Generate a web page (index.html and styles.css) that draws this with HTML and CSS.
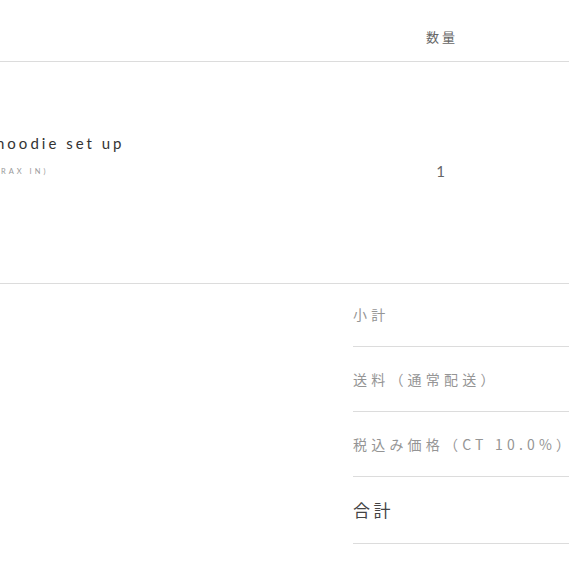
FILE: index.html
```html
<!DOCTYPE html>
<html lang="ja">
<head>
<meta charset="utf-8">
<link rel="stylesheet" href="styles.css">
</head>
<body>
<div class="cart">
  <div class="cart-head">
    <div class="col-product"></div>
    <div class="col-qty head-label">数量</div>
    <div class="col-price"></div>
  </div>
  <div class="cart-item">
    <div class="col-product item-info">
      <div class="item-name">hoodie set up</div>
      <div class="item-variant">(RAX IN)</div>
    </div>
    <div class="col-qty item-qty">1</div>
    <div class="col-price"></div>
  </div>
  <div class="summary">
    <div class="sum-row first"><span class="sum-label">小計</span></div>
    <div class="sum-row"><span class="sum-label">送料（通常配送）</span></div>
    <div class="sum-row"><span class="sum-label">税込み価格（CT 10.0%）</span></div>
    <div class="sum-row total"><span class="sum-label">合計</span></div>
  </div>
</div>
</body>
</html>
```
FILE: styles.css
```css
html, body {
  margin: 0;
  padding: 0;
  background: #ffffff;
  overflow: hidden;
}
body {
  width: 569px;
  height: 569px;
  font-family: "Noto Sans CJK JP", "Noto Sans", sans-serif;
  color: #555;
}
.cart {
  display: flex;
  flex-direction: column;
}
.cart-head,
.cart-item {
  display: grid;
  grid-template-columns: 1fr 100px 77px;
  border-bottom: 1px solid #dcdcdc;
}
.cart-head {
  height: 61px;
  align-items: end;
}
.head-label {
  font-size: 13px;
  letter-spacing: 3px;
  color: #666;
  line-height: 18px;
  padding-bottom: 15px;
  text-align: center;
}
.cart-item {
  height: 221px;
  align-items: start;
}
.item-info {
  margin-left: -4px;
  padding-top: 71px;
  display: flex;
  flex-direction: column;
  gap: 14px;
}
.item-name {
  font-family: "Lato", "Open Sans", sans-serif;
  font-size: 15px;
  letter-spacing: 3px;
  color: #333;
  line-height: 20px;
  white-space: nowrap;
}
.item-variant {
  font-family: "Lato", sans-serif;
  font-size: 7.5px;
  letter-spacing: 3px;
  color: #999;
  line-height: 10px;
  white-space: nowrap;
}
.item-qty {
  font-family: "Lato", sans-serif;
  font-size: 15px;
  color: #666;
  text-align: center;
  padding-top: 99px;
  padding-right: 3px;
  line-height: 20px;
}
.summary {
  margin-left: 353px;
  display: flex;
  flex-direction: column;
}
.sum-row {
  padding: 22px 0;
  border-bottom: 1px solid #dcdcdc;
}
.sum-row.first {
  padding-top: 20px;
}
.sum-label {
  display: block;
  font-size: 14px;
  line-height: 20px;
  letter-spacing: 4.2px;
  color: #959595;
  white-space: nowrap;
}
.total .sum-label {
  font-size: 17px;
  line-height: 22px;
  letter-spacing: 3.5px;
  color: #444;
}
```
